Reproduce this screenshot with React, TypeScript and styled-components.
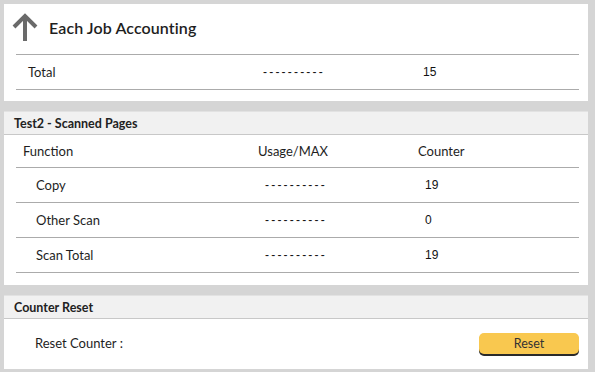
import React from "react";
import styled, { createGlobalStyle } from "styled-components";

const Global = createGlobalStyle`
  html, body { margin: 0; padding: 0; background: #d5d5d5; }
  body { font-family: "Lato", "Noto Sans", sans-serif; color: #1e1e1e; }
  *, *::before, *::after { box-sizing: border-box; }
`;

const Page = styled.div`
  width: 595px;
  height: 372px;
  padding: 4px 7px 4px 4px;
  display: flex;
  flex-direction: column;
  gap: 10px;
  background: #d5d5d5;
`;

const Panel = styled.section<{ $pb: number }>`
  background: #fff;
  padding-bottom: ${(p) => p.$pb}px;
`;

const TitleBar = styled.div`
  height: 50px;
  display: flex;
  align-items: center;
  gap: 11px;
  padding: 0 9px 4px 8px;
`;

const Title = styled.h1`
  margin: 0;
  font-size: 16px;
  font-weight: 600;
  color: #1e1e1e;
  letter-spacing: 0.1px;
`;

const SectionHeader = styled.div`
  height: 24px;
  background: #f1f1f1;
  border-top: 1px solid #e2e2e2;
  border-bottom: 1px solid #c8c8c8;
  display: flex;
  align-items: center;
  padding-left: 10px;
  font-size: 12.5px;
  font-weight: 700;
  color: #222;
`;

const Table = styled.div<{ $top?: boolean }>`
  margin: 0 9px 0 12px;
  border-top: ${(p) => (p.$top ? "1px solid #ababab" : "none")};
`;

const Row = styled.div<{ $h: number }>`
  display: grid;
  grid-template-columns: 242px 160px 1fr;
  align-items: center;
  height: ${(p) => p.$h}px;
  border-bottom: 1px solid #ababab;
`;

const Label = styled.div<{ $indent: number }>`
  padding-left: ${(p) => p.$indent}px;
  font-size: 13px;
  color: #1e1e1e;
`;

const Value = styled.div<{ $indent: number; $dash?: boolean }>`
  padding-left: ${(p) => p.$indent}px;
  font-family: "Liberation Sans", Arial, sans-serif;
  font-size: 12px;
  letter-spacing: ${(p) => (p.$dash ? "2.2px" : "0")};
  color: #111;
`;

const ResetBody = styled.div`
  height: 50px;
  display: flex;
  align-items: center;
  justify-content: space-between;
  padding: 0 9px 2px 31px;
`;

const ResetButton = styled.button`
  width: 100px;
  height: 21px;
  border: none;
  border-radius: 5px;
  background: #f9c84f;
  box-shadow: 0 2px 0 #2a2a2a;
  font-family: "Lato", "Noto Sans", sans-serif;
  font-size: 12.5px;
  color: #333;
  padding: 0;
  cursor: pointer;
`;

const ArrowUp = () => (
  <svg width="26" height="28" viewBox="0 0 26 28" fill="none">
    <path d="M13 3 V28" stroke="#6a6a6a" strokeWidth="4" />
    <path d="M2 14 L13 3 L24 14" stroke="#6a6a6a" strokeWidth="4" strokeLinejoin="miter" />
  </svg>
);

const scanRows = [
  { name: "Copy", usage: "----------", count: "19" },
  { name: "Other Scan", usage: "----------", count: "0" },
  { name: "Scan Total", usage: "----------", count: "19" },
];

export default function App() {
  return (
    <>
      <Global />
      <Page>
        <Panel $pb={11}>
          <TitleBar>
            <ArrowUp />
            <Title>Each Job Accounting</Title>
          </TitleBar>
          <Table $top>
            <Row $h={35}>
              <Label $indent={12}>Total</Label>
              <Value $indent={5} $dash>----------</Value>
              <Value $indent={5}>15</Value>
            </Row>
          </Table>
        </Panel>
        <Panel $pb={12}>
          <SectionHeader>Test2 - Scanned Pages</SectionHeader>
          <Table>
            <Row $h={33}>
              <Label $indent={7}>Function</Label>
              <Label $indent={0}>Usage/MAX</Label>
              <Label $indent={0}>Counter</Label>
            </Row>
            {scanRows.map((r) => (
              <Row $h={35} key={r.name}>
                <Label $indent={20}>{r.name}</Label>
                <Value $indent={7} $dash>{r.usage}</Value>
                <Value $indent={7}>{r.count}</Value>
              </Row>
            ))}
          </Table>
        </Panel>
        <Panel $pb={0}>
          <SectionHeader>Counter Reset</SectionHeader>
          <ResetBody>
            <Label $indent={0}>Reset Counter :</Label>
            <ResetButton>Reset</ResetButton>
          </ResetBody>
        </Panel>
      </Page>
    </>
  );
}
